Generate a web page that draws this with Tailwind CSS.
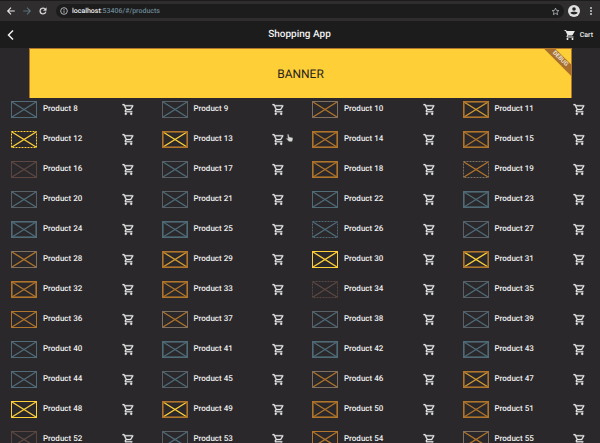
<!DOCTYPE html>
<html lang="en">
<head>
<meta charset="utf-8">
<meta name="viewport" content="width=device-width, initial-scale=1">
<title>Shopping App</title>
<script src="https://cdn.jsdelivr.net/npm/@tailwindcss/browser@4"></script>
</head>
<body class="relative flex h-screen flex-col overflow-hidden bg-[#2a282b] font-[Roboto,sans-serif] text-[#f0f0f0] [text-rendering:geometricPrecision]">

  <!-- Browser toolbar -->
  <div class="flex h-[21px] shrink-0 items-center gap-1 border-t border-[#1c1c1c] bg-[#302d2f] pr-1 pl-[6px]">
    <nav class="flex items-center gap-[6px]" aria-label="Browser">
      <button aria-label="Back" class="size-[10px]"><svg viewBox="0 0 24 24" class="size-[10px]" fill="none" stroke="#e8e8e8" stroke-width="2.6"><path d="M21 12H4M12 4l-8 8 8 8"/></svg></button>
      <button aria-label="Forward" class="size-[10px]"><svg viewBox="0 0 24 24" class="size-[10px]" fill="none" stroke="#587077" stroke-width="2.6"><path d="M3 12h17M12 4l8 8-8 8"/></svg></button>
      <button aria-label="Reload" class="size-[10px]"><svg viewBox="0 0 24 24" class="size-[10px]" fill="#e8e8e8" stroke="#e8e8e8" stroke-width=".8"><path d="M17.65 6.35A7.96 7.96 0 0 0 12 4a8 8 0 1 0 7.73 10h-2.08A6 6 0 1 1 12 6c1.66 0 3.14.69 4.22 1.78L13 11h7V4z"/></svg></button>
    </nav>
    <div class="ml-1 flex h-[14px] flex-1 items-center gap-1 rounded-full bg-[#1c1c1c] px-1">
      <svg viewBox="0 0 24 24" class="size-2 shrink-0" fill="none" stroke="#c5c9cb" stroke-width="2.6"><circle cx="12" cy="12" r="10"/><path d="M12 10.500v7M12 6v3"/></svg>
      <span class="flex-1 text-[7px] leading-[12px] font-medium text-[#6b8794]"><span class="text-[#f0f0f0]">localhost</span>:53406/#/products</span>
      <button aria-label="Bookmark" class="size-[9px]"><svg viewBox="0 0 24 24" class="size-[9px]" fill="none" stroke="#b9c3c7" stroke-width="2"><path d="M12 3l2.700 6 6.300.6-4.800 4.300 1.400 6.500L12 17l-5.600 3.400 1.400-6.500L3 9.600 9.300 9z"/></svg></button>
    </div>
    <button aria-label="Profile" class="size-3"><svg viewBox="0 0 24 24" class="size-3"><circle cx="12" cy="12" r="12" fill="#e0e0e0"/><circle cx="12" cy="8" r="3.600" fill="#252326"/><path d="M4.800 15.500C7 12.700 17 12.700 19.200 15.500 17 20 7 20 4.800 15.500z" fill="#252326"/></svg></button>
    <button aria-label="Menu" class="ml-[2px] size-[10px]"><svg viewBox="0 0 10 10" class="size-[10px]" fill="#c9d0d3"><circle cx="5" cy="2" r="1"/><circle cx="5" cy="5" r="1"/><circle cx="5" cy="8" r="1"/></svg></button>
  </div>

  <!-- App bar -->
  <header class="grid h-[27px] shrink-0 grid-cols-3 items-center bg-[#1c1c1c] pr-[7px] pl-[6px]">
    <button aria-label="Go back" class="size-[10px]"><svg viewBox="0 0 10 10" class="size-[10px]" fill="none" stroke="#f0f0f0" stroke-width="1.500"><path d="M7 0.500L2.500 5 7 9.500"/></svg></button>
    <h1 class="text-center text-[10px] leading-[14px] font-medium">Shopping App</h1>
    <a href="#cart" class="flex items-center justify-end gap-1 text-[7px] leading-[12px] font-medium">
      <svg viewBox="0 0 24 24" class="size-3" fill="#e8e8e8"><path d="M7 18c-1.100 0-1.990.9-1.990 2S5.900 22 7 22s2-.9 2-2-.9-2-2-2zM1 2v2h2l3.600 7.590-1.350 2.450C4.520 15.370 5.480 17 7 17h12v-2H7.420c-.14 0-.25-.11-.25-.25L8.100 13h7.450c.75 0 1.410-.41 1.750-1.030L21.700 4H5.210l-.94-2H1zm16 16c-1.100 0-1.990.9-1.990 2s.89 2 1.990 2 2-.9 2-2-.9-2-2-2z"/></svg>
      <span>Cart</span>
    </a>
  </header>

  <!-- Promotional banner -->
  <section class="relative z-10 mr-[28px] ml-[29px] flex h-[50px] shrink-0 items-center justify-center overflow-hidden border-t border-r border-l border-[#b0742a] bg-[#ffcf37] text-[12px] leading-[16px] text-[#28251f]">
    BANNER
    <span class="absolute top-[6px] -right-[15px] w-[52px] rotate-45 bg-[#a8702c] text-center text-[6px] leading-[8px] font-bold text-[#e8e0d8]">DEBUG</span>
  </section>

  <main class="-mt-1 min-h-0 flex-1 overflow-hidden">
    <ul id="products" class="grid grid-cols-4 gap-x-[2px]"></ul>
  </main>

  <!-- Pointer -->
  <svg viewBox="0 0 14 16" class="pointer-events-none absolute top-[134px] left-[286px] h-[8px] w-[7px]" aria-hidden="true"><path d="M3 1q2-1 2.500 1l.8 4L13 7.500q1 1 .5 3L12 15H6L1 9.500q0-2 3-.5z" fill="#d8d8d8" stroke="#777" stroke-width=".8"/></svg>

  <template id="product">
    <li class="flex h-[30px] items-center pr-[14px] pl-[11px]">
      <svg viewBox="0 0 26 17" class="h-[17px] w-[26px] shrink-0" fill="none" aria-hidden="true">
        <path class="cross" d="M1 1l24 15M25 1L1 16"/>
        <rect class="frame" x=".5" y=".5" width="25" height="16"/>
      </svg>
      <span class="ml-[6px] flex-1 text-[8px] leading-[12px] font-medium whitespace-nowrap"></span>
      <button class="size-[13px]"><svg viewBox="0 0 24 24" class="size-[13px]" fill="#e8e8e8" stroke="#e8e8e8" stroke-width=".5"><path d="M15.550 13c.75 0 1.410-.41 1.750-1.030l3.580-6.490c.37-.66-.11-1.480-.87-1.480H5.210l-.94-2H1v2h2l3.600 7.590-1.350 2.440C4.520 15.370 5.480 17 7 17h12v-2H7l1.100-2h7.450zM6.160 6h12.150l-2.760 5H8.530L6.160 6zM7 18c-1.100 0-1.990.9-1.990 2S5.900 22 7 22s2-.9 2-2-.9-2-2-2zm10 0c-1.100 0-1.990.9-1.990 2s.89 2 1.990 2 2-.9 2-2-.9-2-2-2z"/></svg></button>
    </li>
  </template>

  <script>
    const colors = { s: '#4f6b78', b: '#5a4741', o: '#b0742a', a: '#d49a30', y: '#ffcf37', g: '#80705f', m: '#576066' };
    // One entry per product: frame colour, cross colour, then "2" for a heavy frame or "d" for a dotted one
    const looks = ('ss ms go oa2 yyd oy2 oo2 oo2 bb ms oo2 god ms ms ss ss2 ss2 ss2 ssd ms ' +
      'go oa2 yy oy2 oo2 oo2 bbd ms oo go ms ms ss ss2 ss2 ss2 ss ms go oa2 yy oy2 oo2 oo2 bb ms oo go').split(' ');
    const list = document.getElementById('products');
    const template = document.getElementById('product');
    looks.forEach((look, i) => {
      const name = 'Product ' + (i + 8);
      const item = template.content.cloneNode(true);
      const frame = item.querySelector('.frame');
      frame.setAttribute('stroke', colors[look[0]]);
      if (look[2] === '2') {
        frame.setAttribute('x', '.8');
        frame.setAttribute('y', '.8');
        frame.setAttribute('width', '24.4');
        frame.setAttribute('height', '15.4');
        frame.setAttribute('stroke-width', '1.6');
      }
      if (look[2] === 'd') frame.setAttribute('stroke-dasharray', '2 1');
      const cross = item.querySelector('.cross');
      cross.setAttribute('stroke', colors[look[1]]);
      cross.setAttribute('stroke-width', '1.4');
      item.querySelector('span').textContent = name;
      item.querySelector('button').setAttribute('aria-label', 'Add ' + name + ' to cart');
      list.append(item);
    });
  </script>
</body>
</html>
